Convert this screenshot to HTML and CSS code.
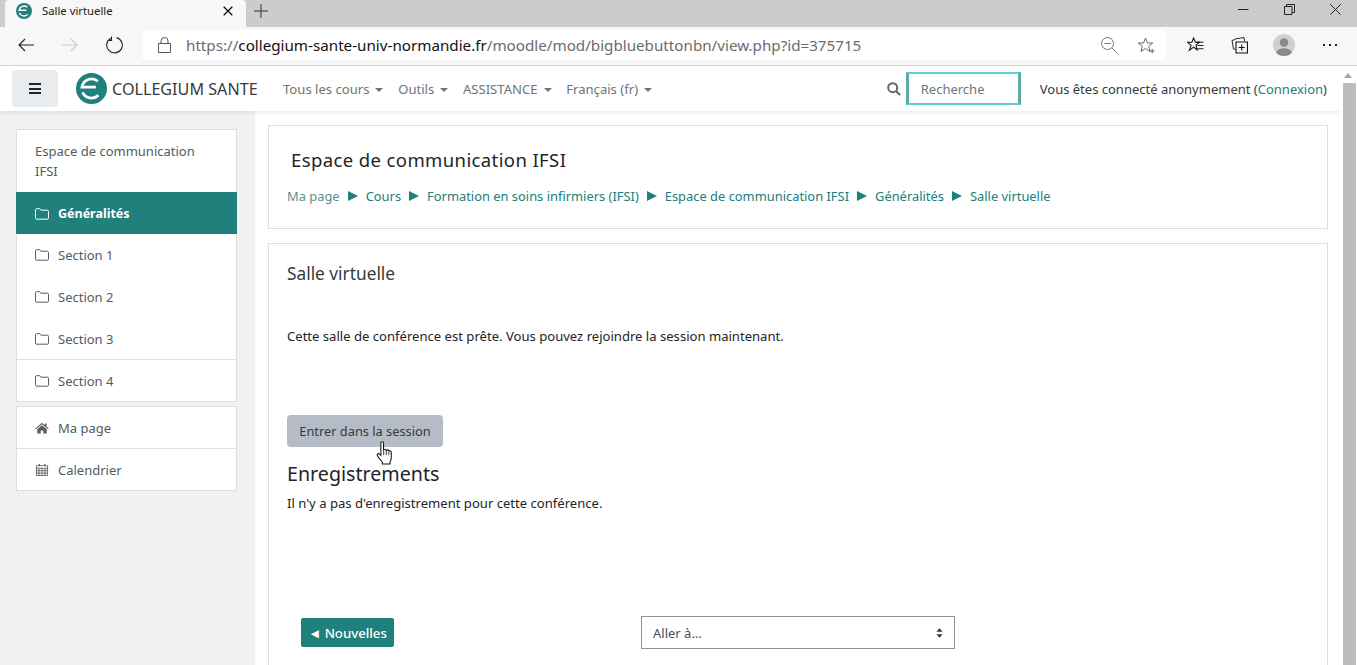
FILE: index.html
```html
<!DOCTYPE html>
<html lang="fr">
<head>
<meta charset="utf-8">
<title>Salle virtuelle</title>
<link rel="stylesheet" href="styles.css">
</head>
<body>
<div class="tabstrip">
  <div class="tab">
    <svg class="tab-logo" viewBox="0 0 32 32"><circle cx="16" cy="16" r="16" fill="#20807c"/><path d="M22.500 8.500A10 10 0 0 0 6.200 14.500H20.500M6.800 20A10 10 0 0 0 23 23" fill="none" stroke="#fff" stroke-width="3"/></svg>
    <span class="tab-title">Salle virtuelle</span>
    <svg class="tab-close" viewBox="0 0 10 10"><path d="M.7.7l8.600 8.600M9.300.7L.7 9.300" stroke="#111" stroke-width="1.300" fill="none"/></svg>
  </div>
  <svg class="tab-new" viewBox="0 0 14 14"><path d="M7 0v14M0 7h14" stroke="#333" stroke-width="1" fill="none"/></svg>
  <div class="window-buttons">
    <svg viewBox="0 0 11 11"><path d="M0 5.500h10.500" stroke="#222" fill="none"/></svg>
    <svg viewBox="0 0 11 11"><path d="M.5 2.500h7.500v8H.5zM2.500 2.500V.5h8v8H8" stroke="#222" fill="none"/></svg>
    <svg viewBox="0 0 11 11"><path d="M.3.3l10.400 10.400M10.700.3L.3 10.700" stroke="#222" fill="none"/></svg>
  </div>
</div>
<div class="toolbar">
  <svg class="tb-back" viewBox="0 0 16 14"><path d="M7 1L1 7l6 6M1 7h15" stroke="#222" stroke-width="1.100" fill="none"/></svg>
  <svg class="tb-forward" viewBox="0 0 16 14"><path d="M9 1l6 6-6 6M15 7H0" stroke="#c9c9c9" stroke-width="1.100" fill="none"/></svg>
  <svg class="tb-reload" viewBox="0 0 18 18"><path d="M6 2.200A7.800 7.800 0 1 0 11.500 1.600M6.500 .5V4.500H2.500" stroke="#222" stroke-width="1.100" fill="none"/></svg>
  <div class="addressbar">
    <svg class="lock" viewBox="0 0 13 16"><path d="M.5 6.500h12v9H.5zM3 6.500V4a3.500 3.500 0 0 1 7 0v2.500" stroke="#555" fill="none"/></svg>
    <span class="url"><span class="url-dim">https://</span>collegium-sante-univ-normandie.fr<span class="url-dim">/moodle/mod/bigbluebuttonbn/view.php?id=375715</span></span>
    <svg class="zoom-ic" viewBox="0 0 17 17"><circle cx="6.500" cy="6.500" r="6" stroke="#777" fill="none"/><path d="M3.500 6.500h6M11 11l5.500 5.500" stroke="#777" fill="none"/></svg>
    <svg class="fav-ic" viewBox="0 0 17 17"><path d="M7.500 1l2 5h5.300l-4.200 3.300 1.500 5.200-4.600-3-4.600 3 1.500-5.200L.2 6h5.300z" stroke="#666" fill="none"/><path d="M12 14h4.500M14.200 11.800v4.500" stroke="#666" fill="none"/></svg>
  </div>
  <svg class="tb-favs" viewBox="0 0 18 17"><path d="M7 1l1.800 4.600H13L9.500 8.700l1.300 5-3.800-3-4.500 3.500L4.300 9 .5 5.600h4.700z" stroke="#111" stroke-width="1.100" fill="none"/><path d="M9.500 5.500h8M11 9h6.500M11 12.500h6.500" stroke="#111" fill="none"/></svg>
  <svg class="tb-coll" viewBox="0 0 17 18"><path d="M4 3.500L1 4.500l1.500 8.500 2 .5M4 3l9-1.500.5 3.500" stroke="#222" fill="none"/><path d="M5 6h11.500v11H5zM10.700 8.500v6M7.700 11.500h6" stroke="#111" stroke-width="1.100" fill="none"/></svg>
  <svg class="tb-avatar" viewBox="0 0 22 22"><defs><clipPath id="av"><circle cx="11" cy="11" r="11"/></clipPath></defs><circle cx="11" cy="11" r="11" fill="#d2d0ce"/><g clip-path="url(#av)" fill="#8d8a86"><circle cx="11" cy="8.500" r="4.300"/><ellipse cx="11" cy="19" rx="7.500" ry="4.800"/></g></svg>
  <div class="tb-more"><i></i><i></i><i></i></div>
</div>
<div class="viewport">
  <div class="page">
    <nav class="navbar">
      <div class="burger"><i></i><i></i><i></i></div>
      <svg class="brand-logo" viewBox="0 0 32 32"><circle cx="16" cy="16" r="16" fill="#20807c"/><path d="M22.500 8.500A10 10 0 0 0 6.200 14.500H20.500M6.800 20A10 10 0 0 0 23 23" fill="none" stroke="#fff" stroke-width="2.800"/></svg>
      <span class="brand">COLLEGIUM SANTE</span>
      <span class="menu menu-courses">Tous les cours<b class="caret"></b></span>
      <span class="menu">Outils<b class="caret"></b></span>
      <span class="menu">ASSISTANCE<b class="caret"></b></span>
      <span class="menu">Français (fr)<b class="caret"></b></span>
      <svg class="search-ic" viewBox="0 0 14 14"><circle cx="5.700" cy="5.700" r="4.500" stroke="#666" stroke-width="2" fill="none"/><path d="M9 9l4 4" stroke="#666" stroke-width="2.200"/></svg>
      <div class="search">Recherche</div>
      <span class="login">Vous êtes connecté anonymement (<a>Connexion</a>)</span>
    </nav>
    <div class="columns">
      <aside class="sidebar">
        <div class="side-card">
          <div class="side-head">Espace de communication IFSI</div>
          <div class="side-item active"><svg class="folder" viewBox="0 0 14 12"><path d="M.5 2C.5 1 1 .7 1.700.7h3l1.300 1.500h6.300c.7 0 1.200.4 1.200 1.200v6.500c0 .8-.5 1.300-1.200 1.300H1.700c-.7 0-1.200-.5-1.200-1.300z" fill="none" stroke="currentColor"/></svg><span class="active-label">Généralités</span></div>
          <div class="side-item"><svg class="folder" viewBox="0 0 14 12"><path d="M.5 2C.5 1 1 .7 1.700.7h3l1.300 1.500h6.300c.7 0 1.200.4 1.200 1.200v6.500c0 .8-.5 1.300-1.200 1.300H1.700c-.7 0-1.200-.5-1.200-1.300z" fill="none" stroke="currentColor"/></svg>Section 1</div>
          <div class="side-item"><svg class="folder" viewBox="0 0 14 12"><path d="M.5 2C.5 1 1 .7 1.700.7h3l1.300 1.500h6.300c.7 0 1.200.4 1.200 1.200v6.500c0 .8-.5 1.300-1.200 1.300H1.700c-.7 0-1.200-.5-1.200-1.300z" fill="none" stroke="currentColor"/></svg>Section 2</div>
          <div class="side-item"><svg class="folder" viewBox="0 0 14 12"><path d="M.5 2C.5 1 1 .7 1.700.7h3l1.300 1.500h6.300c.7 0 1.200.4 1.200 1.200v6.500c0 .8-.5 1.300-1.200 1.300H1.700c-.7 0-1.200-.5-1.200-1.300z" fill="none" stroke="currentColor"/></svg>Section 3</div>
          <div class="side-item ruled"><svg class="folder" viewBox="0 0 14 12"><path d="M.5 2C.5 1 1 .7 1.700.7h3l1.300 1.500h6.300c.7 0 1.200.4 1.200 1.200v6.500c0 .8-.5 1.300-1.200 1.300H1.700c-.7 0-1.200-.5-1.200-1.300z" fill="none" stroke="currentColor"/></svg>Section 4</div>
        </div>
        <div class="side-card">
          <div class="side-item"><svg class="folder" viewBox="0 0 14 12"><path d="M7 .8L.3 6.500l.7.8L7 2.300l6 5 .7-.8-2.200-1.900V1.500H9.800v1.700z" fill="currentColor"/><path d="M2.300 7.200L7 3.300l4.700 3.900v4.300H8.300V8.500H5.700v3H2.300z" fill="currentColor"/></svg>Ma page</div>
          <div class="side-item ruled"><svg class="folder" viewBox="0 0 14 14"><path d="M3 0h1.500v2H3zM9.500 0H11v2H9.500z" fill="currentColor"/><path d="M.5 2h13v11.500H.5zM.5 5h13M.5 7.800h13M.5 10.600h13M3.500 5v8.500M7 5v8.500M10.500 5v8.500" fill="none" stroke="currentColor"/></svg>Calendrier</div>
        </div>
      </aside>
      <main class="content">
        <section class="card card-header">
          <h1 class="page-title">Espace de communication IFSI</h1>
          <div class="crumbs">
            <a class="crumb-first">Ma page</a><b class="sep"></b><a>Cours</a><b class="sep"></b><a>Formation en soins infirmiers (IFSI)</a><b class="sep"></b><a>Espace de communication IFSI</a><b class="sep"></b><a>Généralités</a><b class="sep"></b><a>Salle virtuelle</a>
          </div>
        </section>
        <section class="card card-main">
          <h2 class="activity-title">Salle virtuelle</h2>
          <p class="ready">Cette salle de conférence est prête. Vous pouvez rejoindre la session maintenant.</p>
          <div class="join-wrap">
            <button class="join">Entrer dans la session</button>
            <svg class="cursor" viewBox="0 0 16 23"><path d="M4.500 2c0-1.800 2.600-1.800 2.600 0v6.500c1.200-.6 2.200-.4 2.600.3 1-.4 2-.3 2.400.5 1.100-.3 2.400.2 2.400 1.700v5c0 2-.6 2.800-1.200 4v2H6v-1.500c-1.200-1.500-3-3.500-4.800-6.300-.8-1.300.6-2.800 2-1.600l1.300 1.200z" fill="#fff" stroke="#111" stroke-width="1"/><path d="M7.200 9v4.500M9.700 9v4.500M12.200 10v3.500" stroke="#111" stroke-width=".8" fill="none"/></svg>
          </div>
          <h3 class="records">Enregistrements</h3>
          <p class="none">Il n'y a pas d'enregistrement pour cette conférence.</p>
          <div class="footer-row">
            <a class="prev">◄ Nouvelles</a>
            <div class="jump">Aller à…<svg class="jump-arrows" viewBox="0 0 8 11"><path d="M4 0l3.500 4h-7zM4 11L.5 7h7z" fill="#333"/></svg></div>
          </div>
        </section>
      </main>
    </div>
  </div>
  <div class="scrollbar"><svg class="scroll-up" viewBox="0 0 8 5"><path d="M4 0l4 5H0z" fill="#a6a6a6"/></svg><div class="thumb"></div></div>
</div>
</body>
</html>
```
FILE: styles.css
```css
* { box-sizing: border-box; }
html, body { margin: 0; height: 100%; overflow: hidden; }
body {
  display: flex;
  flex-direction: column;
  font-family: "Noto Sans", "Open Sans", sans-serif;
  font-size: 13px;
  color: #373a3c;
  background: #fff;
}
svg { display: block; flex: none; }

.tabstrip { height: 27px; background: #cccccc; display: flex; align-items: flex-start; flex: none; }
.tab { width: 241px; height: 27px; margin-left: 5px; background: #f7f7f7; border-radius: 4px 4px 0 0; display: flex; align-items: center; padding: 0 0 5px 11px; }
.tab-logo { width: 16px; height: 16px; }
.tab-title { margin: 0 0 1px 10px; font-size: 11.300px; color: #222; flex: 1; }
.tab-close { width: 10px; height: 10px; margin-right: 13px; }
.tab-new { width: 14px; height: 14px; margin: 4px 0 0 8px; }
.window-buttons { margin-left: auto; display: flex; gap: 35px; padding: 4px 16px 0 0; }
.window-buttons svg { width: 11px; height: 11px; }

.toolbar { height: 39px; background: #f7f7f7; border-bottom: 1px solid #d4d4d4; display: flex; align-items: center; flex: none; padding-bottom: 2px; }
.tb-back { width: 16px; height: 14px; margin-left: 18px; }
.tb-forward { width: 16px; height: 14px; margin-left: 28px; }
.tb-reload { width: 18px; height: 18px; margin-left: 27px; }
.addressbar { width: 1024px; height: 30px; margin-left: 19px; background: #fff; border-radius: 4px; display: flex; align-items: center; padding-left: 16px; }
.lock { width: 13px; height: 16px; }
.url { margin-left: 15px; font-size: 15.200px; color: #111; white-space: nowrap; }
.url-dim { color: #6b6b6b; }
.zoom-ic { width: 17px; height: 17px; margin-left: auto; }
.fav-ic { width: 17px; height: 17px; margin: 0 11px 0 20px; }
.tb-favs { width: 17px; height: 16px; margin-left: 21px; }
.tb-coll { width: 17px; height: 18px; margin-left: 27px; }
.tb-avatar { width: 22px; height: 22px; margin-left: 25px; }
.tb-more { display: flex; gap: 4px; margin-left: 28px; }
.tb-more i { width: 2px; height: 2px; background: #222; }

.viewport { flex: 1; min-height: 0; display: flex; }
.page { flex: 1; min-width: 0; display: flex; flex-direction: column; overflow: hidden; }
.scrollbar { width: 16px; flex: none; background: #fff; padding-left: 2px; padding-right: 1px; }
.scroll-up { width: 8px; height: 5px; margin: 7px 0 0 1px; }
.thumb { height: 585px; margin-top: 5px; background: #bdbdbd; }

.navbar { height: 45px; flex: none; display: flex; align-items: center; background: #fff; box-shadow: 0 2px 4px rgba(0,0,0,.07); position: relative; z-index: 1; }
.burger { width: 46px; height: 37px; margin-left: 12px; background: #e9ecef; border-radius: 4px; display: flex; flex-direction: column; justify-content: center; align-items: center; gap: 2.500px; }
.burger i { width: 12px; height: 2px; background: #212529; }
.brand-logo { width: 31px; height: 31px; margin-left: 18px; }
.brand { margin-left: 5px; font-size: 16.150px; color: #373a3c; width: 171px; white-space: nowrap; }
.menu { font-size: 13.100px; color: #6f7479; margin-right: 14.700px; white-space: nowrap; }
.caret { display: inline-block; width: 0; height: 0; border: 4px solid transparent; border-top-color: #6f7479; border-bottom: 0; margin-left: 6px; vertical-align: 2px; }
.search-ic { width: 14px; height: 14px; margin-left: auto; }
.search { width: 115px; height: 33px; margin-left: 5px; border: solid; border-width: 2px 3px; border-color: #5dd0cd #5aabaa; padding-left: 12px; display: flex; align-items: center; color: #6f7780; font-size: 13px; }
.login { margin: 0 14px 0 19px; font-size: 13px; white-space: nowrap; }
.login a { color: #20807c; }

.columns { flex: 1; min-height: 0; display: flex; }
.sidebar { width: 255px; flex: none; background: #f1f1f1; padding: 18px 18px 0 16px; display: flex; flex-direction: column; gap: 4px; }
.side-card { background: #fff; border: 1px solid #dfdfdf; }
.side-head { padding: 11px 18px 11px; line-height: 20px; color: #555b60; }
.side-item { height: 41.670px; display: flex; align-items: center; padding: .8px 0 0 18px; color: #555b60; }
.side-item.ruled { border-top: 1px solid #dfdfdf; }
.side-item.active { height: 42px; background: #20807c; color: #fff; margin: 0 -1px; padding: 1px 0 0 19px; }
.active-label { font-weight: 700; font-size: 12.500px; }
.folder { width: 14px; height: 12px; margin-right: 9px; }

.content { flex: 1; min-width: 0; padding: 14px 13px 0 13px; }
.card { background: #fff; border: 1px solid #dfdfdf; }
.card-header { height: 104px; padding: 21px 18px 0; }
.page-title { margin: 0 0 1px 4px; font-size: 18.500px; letter-spacing: .39px; line-height: 26px; font-weight: 400; color: #212529; }
.crumbs { display: flex; align-items: center; margin-top: 13px; font-size: 12.900px; line-height: 20px; color: #20807c; white-space: nowrap; }
.crumb-first { color: #5c8f95; }
.sep { width: 0; height: 0; border: solid transparent; border-width: 5px 0 5px 10px; border-left-color: #20807c; margin: 0 8px; }
.card-main { height: 500px; margin-top: 14px; padding: 18px 18px 0; }
.activity-title { margin: 0; font-size: 17.300px; line-height: 24px; font-weight: 400; color: #373a3c; }
.ready { margin: 40px 0 0; font-size: 13.080px; line-height: 20px; color: #212529; }
.join-wrap { position: relative; margin-top: 69px; width: 156px; }
.join { display: block; width: 156px; height: 32px; padding: 0; background: #b5bcc6; border: 0; border-radius: 4px; font: inherit; font-size: 12.800px; color: #343a40; }
.cursor { position: absolute; left: 89px; top: 26px; width: 17px; height: 24px; }
.records { margin: 12px 0 0; font-size: 19.660px; line-height: 30px; font-weight: 400; color: #212529; }
.none { margin: 4px 0 0; font-size: 13.080px; line-height: 20px; color: #212529; }
.footer-row { display: flex; align-items: center; margin: 103px 0 0 14px; }
.prev { width: 93px; height: 29px; background: #20807c; color: #fff; border-radius: 2px; display: flex; align-items: center; justify-content: center; font-size: 13.200px; font-weight: 500; }
.jump { width: 314px; height: 33px; margin-left: 247px; border: 1px solid #8f959e; display: flex; align-items: center; justify-content: space-between; padding: 0 11px 0 11px; color: #495057; }
.jump-arrows { width: 7px; height: 10px; }
```
